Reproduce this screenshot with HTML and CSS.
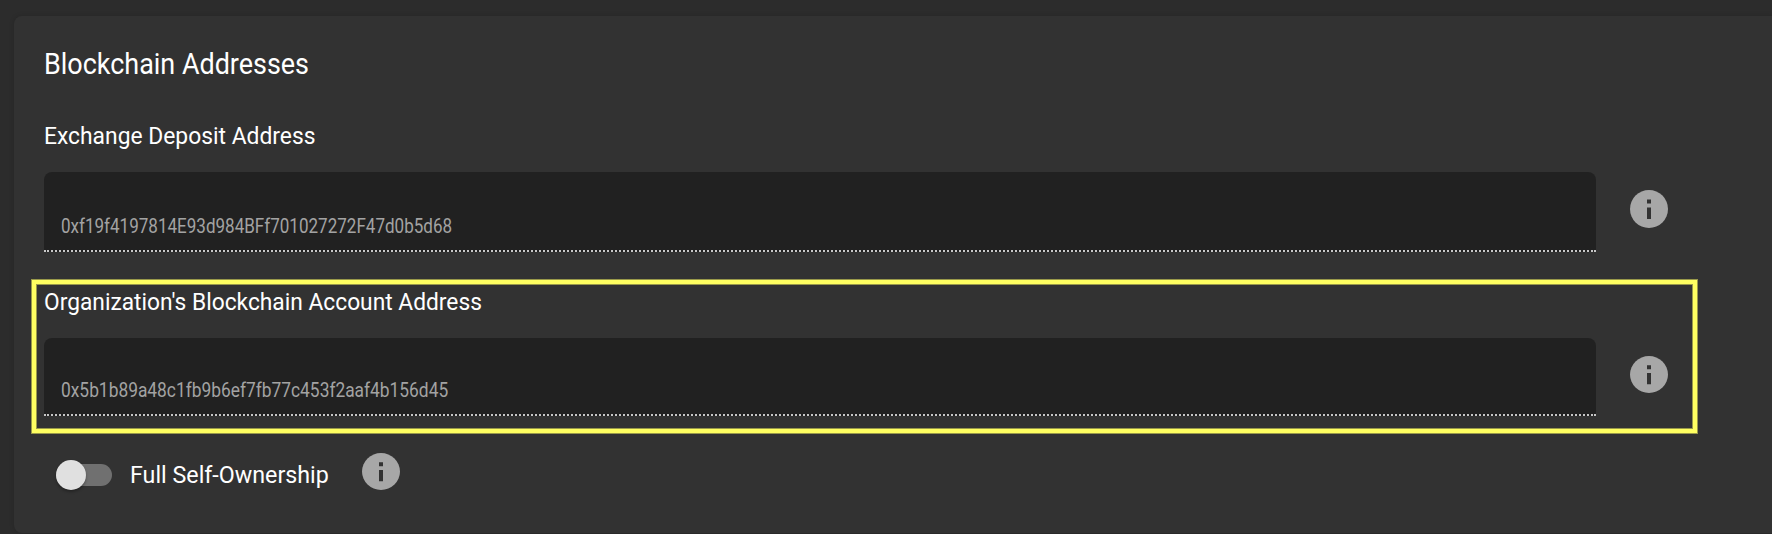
FILE: index.html
```html
<!DOCTYPE html>
<html lang="en">
<head>
<meta charset="utf-8">
<title>Blockchain Addresses</title>
<link rel="stylesheet" href="styles.css">
</head>
<body>
<main class="panel">
  <h1 class="title"><span class="text text-title">Blockchain Addresses</span></h1>
  <section class="group">
    <h2 class="label"><span class="text text-deposit">Exchange Deposit Address</span></h2>
    <div class="row">
      <div class="field"><span class="text text-value">0xf19f4197814E93d984BFf701027272F47d0b5d68</span></div>
      <svg class="info" viewBox="0 0 38 38" preserveAspectRatio="none"><circle cx="19" cy="19" r="19"/><path class="mark" d="M17 9.5h4v4h-4zM17 17.5h4v11.5h-4z"/></svg>
    </div>
  </section>
  <section class="group account">
    <h2 class="label"><span class="text text-account">Organization's Blockchain Account Address</span></h2>
    <div class="row">
      <div class="field field-short"><span class="text text-value2">0x5b1b89a48c1fb9b6ef7fb77c453f2aaf4b156d45</span></div>
      <svg class="info info-short" viewBox="0 0 38 38" preserveAspectRatio="none"><circle cx="19" cy="19" r="19"/><path class="mark" d="M17 9.5h4v4h-4zM17 17.5h4v11.5h-4z"/></svg>
    </div>
  </section>
  <div class="ownership">
    <div class="switch"><div class="knob"></div></div>
    <span class="switch-label"><span class="text text-own">Full Self-Ownership</span></span>
    <svg class="info info-short" viewBox="0 0 38 38" preserveAspectRatio="none"><circle cx="19" cy="19" r="19"/><path class="mark" d="M17 9.5h4v4h-4zM17 17.5h4v11.5h-4z"/></svg>
  </div>
</main>
</body>
</html>
```
FILE: styles.css
```css
*, *::after { box-sizing: border-box; }
body {
  margin: 0;
  height: 534px;
  overflow: hidden;
  padding: 16px 0 1px 14px;
  background: #2c2c2c;
  color: #fff;
  font-family: Roboto, sans-serif;
}
.panel {
  height: 517px;
  padding: 28px 0 0 30px;
  background: #323232;
  border-radius: 8px 0 0 8px;
  box-shadow: 0 0 5px rgba(0, 0, 0, .16);
}
.title, .label { margin: 0; font-weight: 400; white-space: nowrap; }
.title { font-size: 30px; line-height: 40px; }
.label { font-size: 24.5px; line-height: 32px; }
.text { display: inline-block; transform-origin: 0 50%; white-space: nowrap; }
.text-title { transform: scaleX(.898); }
.text-deposit { transform: scaleX(.932); }
.text-account { transform: scaleX(.929); }
.text-value { transform: scaleX(.852); }
.text-value2 { transform: scaleX(.868); }
.text-own { transform: scaleX(.949); }
.group { position: relative; margin-top: 36px; }
.account { margin-top: 34px; }
.account::after {
  content: "";
  position: absolute;
  left: -12px;
  top: -6px;
  width: 1665px;
  height: 153px;
  border: 4px solid #ffff61;
  box-shadow: 0 0 0 1px #99994a, inset 0 0 0 1px #99994a;
}
.row { display: flex; align-items: flex-start; gap: 34px; margin-top: 20px; }
.field {
  width: 1552px;
  height: 80px;
  padding: 42px 17px 0;
  background: #212121;
  border-bottom: 2px dotted #c6c6c6;
  border-radius: 8px 8px 0 0;
  color: #a3a3a3;
  font-size: 20px;
  line-height: 24px;
}
.field-short { height: 78px; padding-top: 40px; }
.info { flex: none; width: 38px; height: 38px; margin-top: 18px; fill: #a7a7a7; }
.info .mark { fill: #323232; }
.info-short { height: 37px; }
.ownership { display: flex; align-items: flex-start; height: 40px; margin-top: 37px; padding-left: 12px; }
.switch { width: 56px; height: 22px; margin-top: 11px; border-radius: 11px; background: #707070; }
.knob {
  width: 30px; height: 30px; margin-top: -4px; border-radius: 50%;
  background: #e0e0e0; box-shadow: 0 2px 3px rgba(0, 0, 0, .3);
}
.switch-label { width: 231px; padding-left: 18px; margin-top: 6px; font-size: 24.5px; line-height: 32px; }
.ownership .info { margin: 0 0 0 19px; }
```
